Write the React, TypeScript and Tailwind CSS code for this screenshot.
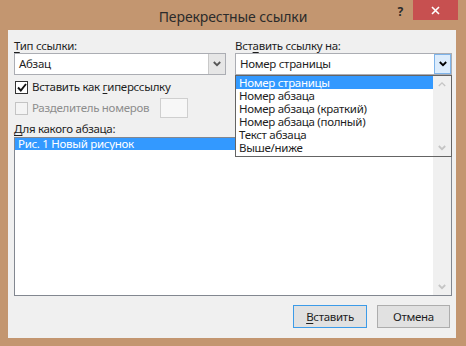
import React from 'react';

const Chevron: React.FC<{ className?: string }> = ({ className }) => (
  <svg width="8" height="6" viewBox="0 0 8 6" className={className}>
    <polyline points="0.8,1 4,4.2 7.2,1" fill="none" stroke="currentColor" strokeWidth="1.8" />
  </svg>
);

const ChevronUp: React.FC<{ className?: string }> = ({ className }) => (
  <svg width="8" height="6" viewBox="0 0 8 6" className={className}>
    <polyline points="0.8,5 4,1.8 7.2,5" fill="none" stroke="currentColor" strokeWidth="1.3" />
  </svg>
);

const dropdownItems = [
  'Номер страницы',
  'Номер абзаца',
  'Номер абзаца (краткий)',
  'Номер абзаца (полный)',
  'Текст абзаца',
  'Выше/ниже',
];

const App: React.FC = () => {
  return (
    <div
      className="w-[466px] h-[346px] bg-[#c39670] flex flex-col text-[11.5px] tracking-[-0.3px] text-[#1e1e1e] overflow-hidden whitespace-nowrap"
      style={{ fontFamily: '"Noto Sans", "Open Sans", sans-serif' }}
    >
      {/* title bar */}
      <div className="h-[30px] grid grid-cols-[1fr_auto_1fr] shrink-0">
        <div />
        <div className="pt-[7px] text-[14px] tracking-[-0.1px] leading-[20px] text-[#2b2b2b]">Перекрестные ссылки</div>
        <div className="flex justify-end items-start pr-[8px]">
          <span className="mt-[5px] mr-[10px] text-[12px] font-bold leading-[14px] text-[#2b2b2b]">?</span>
          <button className="w-[45px] h-[20px] bg-[#c75050] text-white flex items-center justify-center">
            <svg width="9" height="9" viewBox="0 0 9 9">
              <path d="M1 1 L8 8 M8 1 L1 8" stroke="white" strokeWidth="1.6" />
            </svg>
          </button>
        </div>
      </div>

      {/* client area */}
      <div className="ml-[8px] mr-[10px] h-[308px] bg-[#f0f0f0] pl-[6px] pr-[4px] pt-[8px] flex flex-col">
        <div className="flex gap-[9px]">
          {/* left column */}
          <div className="w-[212px] flex flex-col">
            <div className="h-[15px] leading-[15px]">
              <span className="underline underline-offset-2">Т</span>ип ссылки:
            </div>
            <div className="h-[22px] bg-white border border-[#abadb3] flex">
              <div className="flex-1 pl-[4px] leading-[20px]">Абзац</div>
              <div className="w-[17px] bg-[#e6e6e6] border-l border-[#c9c9c9] flex items-center justify-center text-[#555]">
                <Chevron />
              </div>
            </div>
            <div className="mt-[4px] h-[16px] flex items-center">
              <div className="w-[13px] h-[13px] ml-[1px] bg-white border border-[#333] flex items-center justify-center">
                <svg width="10" height="9" viewBox="0 0 10 9">
                  <polyline points="1,4.5 3.8,7.5 9,1" fill="none" stroke="#111" strokeWidth="1.9" />
                </svg>
              </div>
              <span className="ml-[4px] leading-[16px]">
                Вставить как <span className="underline underline-offset-2">г</span>иперссылку
              </span>
            </div>
            <div className="mt-[3px] h-[20px] flex items-center">
              <div className="w-[13px] h-[13px] ml-[1px] bg-[#f4f4f4] border border-[#c4c4c4]" />
              <span className="ml-[4px] w-[128px] text-[#8d8d8d] leading-[16px]">Разделитель номеров</span>
              <div className="w-[28px] h-[20px] bg-[#f7f7f7] border border-[#cfcfcf]" />
            </div>
          </div>

          {/* right column */}
          <div className="w-[217px] flex flex-col">
            <div className="h-[15px] leading-[15px]">
              Вст<span className="underline underline-offset-2">а</span>вить ссылку на:
            </div>
            <div className="relative h-[22px]">
              <div className="h-[22px] bg-white border border-[#abadb3] flex">
                <div className="flex-1 pl-[4px] leading-[20px]">Номер страницы</div>
                <div className="w-[17px] bg-[#dcecfc] border border-[#7eb4ea] flex items-center justify-center text-black">
                  <Chevron />
                </div>
              </div>
              {/* open dropdown list */}
              <div className="absolute left-0 right-0 top-[22px] z-10 h-[82px] bg-white border border-[#646464] flex">
                <div className="flex-1 flex flex-col">
                  {dropdownItems.map((item, i) => (
                    <div
                      key={item}
                      className={
                        i === 0
                          ? 'h-[13px] leading-[13px] pl-[3px] bg-[#3399ff] text-white'
                          : 'h-[13px] leading-[13px] pl-[3px]'
                      }
                    >
                      {item}
                    </div>
                  ))}
                </div>
                <div className="w-[18px] bg-[#f0f0f0] flex flex-col items-center justify-between py-[5px] text-[#c5c5c5]">
                  <ChevronUp />
                  <Chevron />
                </div>
              </div>
            </div>
          </div>
        </div>

        <div className="mt-[3px] h-[15px] leading-[15px]">
          <span className="underline underline-offset-2">Д</span>ля какого абзаца:
        </div>
        <div className="mt-[1px] h-[159px] bg-white border border-[#828790] flex">
          <div className="flex-1">
            <div className="h-[12px] leading-[12px] pl-[3px] bg-[#3399ff] text-white">Рис. 1 Новый рисунок</div>
          </div>
          <div className="w-[18px] bg-[#f0f0f0] flex flex-col items-center justify-between py-[5px] text-[#c5c5c5]">
            <ChevronUp />
            <Chevron />
          </div>
        </div>

        <div className="mt-[9px] flex justify-end gap-[10px] pr-[2px]">
          <button className="w-[74px] h-[23px] bg-[#e1e1e1] border border-[#3c9be8] leading-[21px]">
            <span className="underline underline-offset-2">В</span>ставить
          </button>
          <button className="w-[73px] h-[23px] bg-[#e1e1e1] border border-[#adadad] leading-[21px]">Отмена</button>
        </div>
      </div>
    </div>
  );
};

export default App;
